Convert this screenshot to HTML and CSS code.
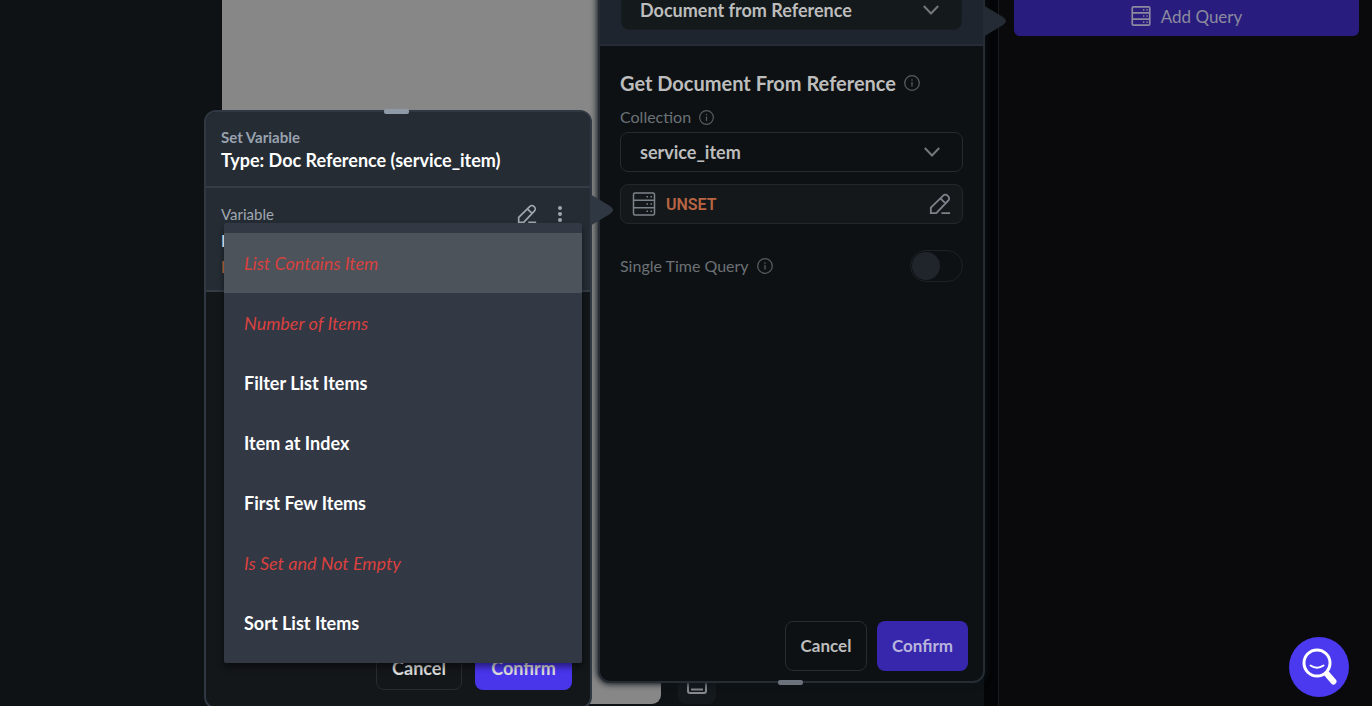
FILE: index.html
```html
<!DOCTYPE html>
<html lang="en">
<head>
<meta charset="utf-8">
<title>Set Variable</title>
<link rel="stylesheet" href="styles.css">
</head>
<body>
<svg class="defs" aria-hidden="true">
  <symbol id="info" viewBox="0 0 16 16"><circle cx="8" cy="8" r="7.300" /><path d="M8 7v4.600M8 4.300v1.400" /></symbol>
  <symbol id="chevron" viewBox="0 0 16 10"><path d="M.8 1l7.200 7.500L15.200 1" /></symbol>
  <symbol id="pencil" viewBox="0 0 24 24"><path d="M2 22v-6L15.500 2.800a3.200 3.200 0 0 1 4.700 0l.8.800a3.200 3.200 0 0 1 0 4.600L8 22zM12.500 5.800l5.700 5.700M13.500 22H23" /></symbol>
  <symbol id="server" viewBox="0 0 24 24"><rect x="1.500" y="1" width="21" height="22" rx="1.500" /><path d="M1.500 8.300h21M1.500 15.700h21M14.500 4.700h1.500M18.500 4.700h1.500M14.500 12h1.500M18.500 12h1.500M14.500 19.300h1.500M18.500 19.300h1.500" /></symbol>
</svg>
<div class="workspace">
  <main class="canvas">
    <div class="phone"></div>
    <button class="device" aria-label="Device"><svg viewBox="0 0 20 20"><rect x="1" y="1" width="18" height="18" rx="2" /><path d="M4 15.500h12" /></svg></button>
  </main>
  <div class="gutter"></div>
  <aside class="side">
    <button class="add-query"><svg class="icon"><use href="#server" /></svg>Add Query</button>
  </aside>
</div>

<section class="popup popup-query">
  <div class="popup-top">
    <div class="field filled">
      <select aria-label="Source"><option>Document from Reference</option></select>
      <svg class="chevron"><use href="#chevron" /></svg>
    </div>
  </div>
  <div class="query-body">
    <h2>Get Document From Reference <svg class="info"><use href="#info" /></svg></h2>
    <label class="label" for="collection">Collection <svg class="info small"><use href="#info" /></svg></label>
    <div class="field">
      <select id="collection"><option>service_item</option></select>
      <svg class="chevron"><use href="#chevron" /></svg>
    </div>
    <button class="unset"><svg class="icon server"><use href="#server" /></svg><span>UNSET</span><svg class="icon pencil"><use href="#pencil" /></svg></button>
    <div class="toggle-row">
      <label class="label" for="single">Single Time Query <svg class="info"><use href="#info" /></svg></label>
      <input class="toggle" type="checkbox" id="single">
    </div>
  </div>
  <footer class="actions">
    <button class="cancel">Cancel</button>
    <button class="confirm">Confirm</button>
  </footer>
  <span class="handle bottom"></span>
  <svg class="pointer" viewBox="0 0 24 32"><path d="M0 0l20 12q6 4 0 8L0 32z" /></svg>
</section>

<section class="popup popup-variable">
  <header class="title">
    <p>Set Variable</p>
    <h1>Type: Doc Reference (service_item)</h1>
  </header>
  <div class="variable">
    <div class="variable-head">
      <span>Variable</span>
      <button aria-label="Edit"><svg class="icon edit"><use href="#pencil" /></svg></button>
      <button aria-label="More"><svg class="more" viewBox="0 0 6 16"><circle cx="3" cy="2" r="2" /><circle cx="3" cy="8" r="2" /><circle cx="3" cy="14" r="2" /></svg></button>
    </div>
    <strong>I</strong>
    <em>I</em>
  </div>
  <footer class="actions">
    <button class="cancel">Cancel</button>
    <button class="confirm">Confirm</button>
  </footer>
  <span class="handle top"></span>
  <svg class="pointer" viewBox="0 0 24 32"><path d="M0 0l20 12q6 4 0 8L0 32z" /></svg>
  <div class="menu" role="menu">
    <button class="invalid active" role="menuitem">List Contains Item</button>
    <button class="invalid" role="menuitem">Number of Items</button>
    <button role="menuitem">Filter List Items</button>
    <button role="menuitem">Item at Index</button>
    <button role="menuitem">First Few Items</button>
    <button class="invalid" role="menuitem">Is Set and Not Empty</button>
    <button role="menuitem">Sort List Items</button>
  </div>
</section>

<button class="help" aria-label="Search help"><svg viewBox="0 0 36 40"><circle cx="16" cy="16" r="13" /><path class="smile" d="M9.500 18.500q6.500 4.500 13 0" /><path class="grip" d="M26 27l6.500 7.500" /></svg></button>
</body>
</html>
```
FILE: styles.css
```css
* { box-sizing: border-box; }
body, h1, h2, p { margin: 0; }
body {
  position: relative;
  min-height: 100vh;
  overflow: hidden;
  background: #0a0a0c;
  font-family: Lato, "Open Sans", sans-serif;
  font-size: 16px;
  color: #fff;
}
button, select { font: inherit; color: inherit; }
button { border: 0; background: none; padding: 0; }
svg { fill: none; stroke: currentColor; flex: none; }
.defs { position: absolute; width: 0; height: 0; }

.workspace { display: flex; height: 100vh; }
.canvas { flex: 1; display: flex; align-items: flex-end; gap: 17px; padding-left: 222px; background: #0e1215; }
.phone { width: 439px; height: calc(100% - 2px); margin-bottom: 2px; background: #878787; border-radius: 0 0 9px 0; }
.device { width: 38px; height: 38px; margin-bottom: 2px; border-radius: 8px; background: #14191d; color: #85898d; }
.device svg { width: 20px; height: 20px; stroke-width: 2; }
.gutter { width: 15px; background: #040506; border-right: 1px solid #191b1e; }
.side { width: 373px; padding: 0 13px 0 15px; }
.add-query {
  display: flex; align-items: center; justify-content: center; gap: 10px;
  width: 100%; height: 36px; padding-bottom: 4px;
  border-radius: 0 0 6px 6px; background: #281d7f; color: #8c8a9e; font-size: 17px;
}
.icon { width: 20px; height: 20px; stroke-width: 2; }

.popup { position: absolute; display: flex; flex-direction: column; width: 387px; border: 2px solid #2f3843; }
.popup-query {
  left: 598px; top: -40px; height: 723px;
  border-color: #252c34; border-radius: 12px; background: #0d1114; color: #bdbdbd;
  box-shadow: 0 0 6px 1px #0d1318;
}
.popup-variable { left: 204px; top: 110px; width: 388px; height: 599px; border-radius: 12px; background: #13171a; }
.popup-top { padding: 28px 21px 14px; border-bottom: 2px solid #252c37; background: #1f252e; border-radius: 10px 10px 0 0; }
.query-body { flex: 1; padding: 23px 20px 0; }
.field { position: relative; }
.field select {
  display: block; width: 100%; height: 40px; padding: 0 19px;
  appearance: none; border: 1px solid #252a2e; border-radius: 8px;
  background: #0d1114; font-size: 18px; font-weight: 700;
}
.field.filled select { padding: 0 18px; background: #14191b; border-color: #181d22; }
.chevron { position: absolute; right: 23px; top: 15px; width: 16px; height: 10px; stroke-width: 2; color: #74777b; pointer-events: none; }
h2 { display: flex; align-items: center; gap: 8px; font-size: 20px; line-height: 28px; font-weight: 700; }
.label { display: flex; align-items: center; gap: 8px; color: #6c7176; font-size: 16px; line-height: 20px; }
h2 + .label { margin: 10px 0 5px; }
.info { width: 16px; height: 16px; color: #575b60; stroke-width: 1.300; }
.info.small { width: 15px; height: 15px; }
.unset {
  display: flex; align-items: center; width: 100%; height: 40px; margin-top: 12px; padding: 0 11px;
  border: 1px solid #22272b; border-radius: 8px; background: #14181b; color: #b96543;
}
.unset span { flex: 1; margin-left: 10px; text-align: left; font: 600 16px Roboto, sans-serif; }
.unset .icon { color: #7c8289; }
.unset .server { width: 24px; height: 24px; stroke-width: 1.500; }
.unset .pencil { width: 22px; height: 22px; }
.toggle-row { display: flex; align-items: center; justify-content: space-between; margin-top: 26px; }
.toggle { appearance: none; width: 53px; height: 32px; margin: 0; padding: 1px; border: 1px solid #1d2226; border-radius: 16px; }
.toggle::before { content: ""; display: block; width: 28px; height: 28px; border-radius: 50%; background: #20252b; }

.actions { display: flex; justify-content: flex-end; font-size: 17px; font-weight: 700; }
.actions button { height: 50px; padding-bottom: 2px; border-radius: 8px; }
.actions .cancel { border: 1px solid #282d32; }
.popup-query .actions { gap: 10px; padding: 0 15px 10px; }
.popup-query .cancel { width: 82px; }
.popup-query .confirm { width: 91px; background: #3727ad; color: #b9b5dd; }
.popup-variable .actions { gap: 13px; padding: 0 18px 17px; margin-top: auto; font-size: 18px; color: #dcdcdc; }
.popup-variable .actions button { height: 44px; padding: 0; }
.popup-variable .cancel { width: 86px; }
.popup-variable .confirm { width: 97px; background: #4935ea; }

.handle { position: absolute; left: 178px; width: 25px; height: 5px; border-radius: 2px; background: #8f9aa8; }
.handle.top { top: -3px; }
.handle.bottom { bottom: -4px; background: #6b727c; }
.pointer { position: absolute; left: 100%; width: 24px; height: 32px; fill: #2f3743; stroke: none; }
.popup-query .pointer { top: 43px; fill: #252b34; }
.popup-variable .pointer { top: 82px; }

.title { padding: 15px 15px 13px; background: #252c34; border-bottom: 2px solid #343c45; border-radius: 10px 10px 0 0; }
.title p { color: #98a2af; font-size: 15px; line-height: 20px; font-weight: 700; }
.title h1 { font-size: 18px; line-height: 26px; }
.variable { height: 104px; padding: 14px 15px 0; background: #252c34; border-bottom: 2px solid #343c45; }
.variable-head { display: flex; align-items: center; height: 24px; padding-right: 12px; gap: 20px; color: #a0a7b0; font-size: 15px; }
.variable-head span { flex: 1; }
.variable-head button { display: flex; }
.more { width: 6px; height: 16px; fill: currentColor; stroke: none; }
.variable strong, .variable em { display: block; font-size: 17px; line-height: 26px; font-style: normal; font-weight: 700; }
.variable strong { margin-top: 2px; }
.variable em { color: #c9683f; }

.menu { position: absolute; left: 18px; top: 111px; width: 358px; padding: 10px 0; background: #323945; box-shadow: 0 4px 6px #0007; border-radius: 2px; }
.menu button { display: block; width: 100%; height: 60px; padding: 0 20px 1px; text-align: left; font-size: 18px; font-weight: 700; }
.menu .invalid { color: #d8413f; font-weight: 400; font-style: italic; }
.menu .active { background: #4c535b; }

.help { position: absolute; right: 23px; bottom: 9px; display: flex; align-items: center; justify-content: center; width: 60px; height: 60px; border-radius: 50%; background: #4b39ef; }
.help svg { width: 36px; height: 40px; stroke-width: 3; stroke-linecap: round; }
.help .smile { stroke-width: 2; }
.help .grip { stroke-width: 6; }
```
